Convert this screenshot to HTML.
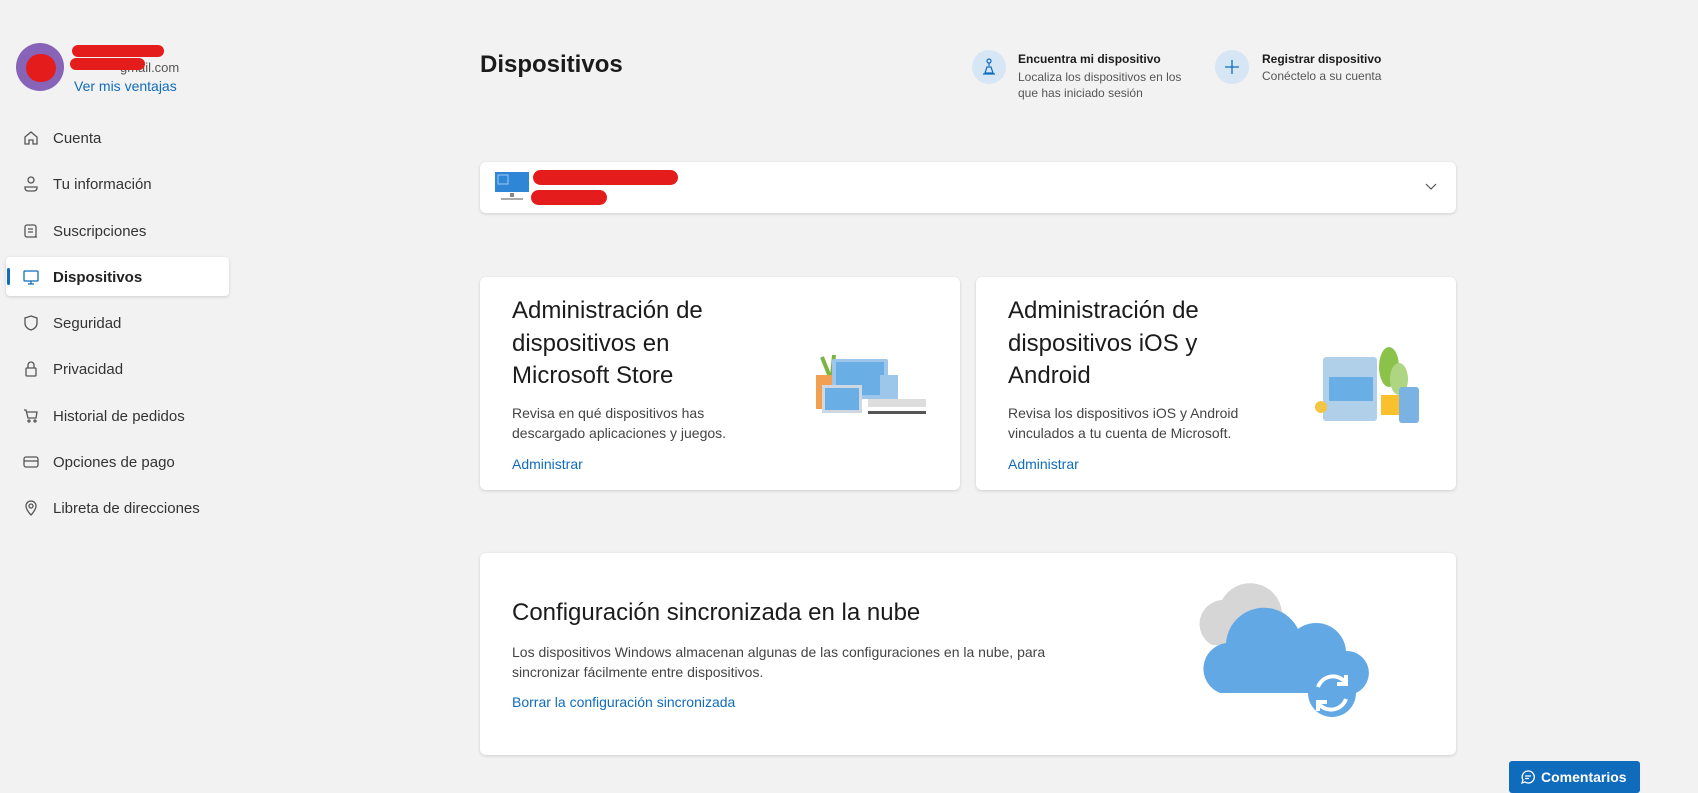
<!DOCTYPE html>
<html><head><meta charset="utf-8"><style>
*{box-sizing:border-box;margin:0;padding:0}
body{width:1698px;height:790px;background:#f2f2f2;font-family:"Segoe UI","Liberation Sans",sans-serif;color:#1b1b1b;position:relative;overflow:hidden}
.a{position:absolute}
.nav{position:absolute;left:22px;font-size:15px;color:#333;height:20px;display:flex;align-items:center}
.nav svg{width:18px;height:18px;margin-right:7px;fill:none;stroke:#555;stroke-width:1.3}
.card{position:absolute;background:#fff;border-radius:6px;box-shadow:0 1px 3px rgba(0,0,0,.15)}
.ct{position:absolute;left:32px;font-size:24px;line-height:32.5px;color:#1b1b1b}
.cd{position:absolute;left:32px;font-size:14px;line-height:20px;color:#444}
.lk{position:absolute;left:32px;font-size:14px;color:#0f6cbd}
.red{position:absolute;background:#e51c1c;border-radius:12px}
</style></head><body>
<div class="a" style="left:16px;top:43px;width:48px;height:48px;border-radius:50%;background:#8764b8"></div>
<div class="red" style="left:26px;top:54px;width:30px;height:28px;border-radius:14px"></div>
<div class="a" style="left:120px;top:60px;font-size:13px;color:#555">gmail.com</div>
<div class="red" style="left:72px;top:45px;width:92px;height:12px"></div>
<div class="red" style="left:70px;top:58px;width:75px;height:12px"></div>
<div class="a" style="left:74px;top:78px;font-size:14px;color:#0f6cbd">Ver mis ventajas</div>

<div class="a" style="left:6px;top:257px;width:223px;height:39px;background:#fff;border-radius:4px;box-shadow:0 1px 3px rgba(0,0,0,.15)"></div>
<div class="a" style="left:7px;top:268px;width:3px;height:17px;background:#0f6cbd;border-radius:2px"></div>

<div class="nav" style="top:128px"><svg viewBox="0 0 18 18"><path d="M3 8L9 3l6 5v7h-4v-4H7v4H3z"/></svg><span style="margin-left:6px">Cuenta</span></div>
<div class="nav" style="top:174px"><svg viewBox="0 0 18 18"><circle cx="9" cy="5" r="3"/><path d="M3 12h12v1a3 3 0 0 1-3 3H6a3 3 0 0 1-3-3z"/></svg><span style="margin-left:6px">Tu información</span></div>
<div class="nav" style="top:221px"><svg viewBox="0 0 18 18"><rect x="3" y="3" width="11" height="12" rx="2"/><path d="M6 7h5M6 10h5M13 15l2 0"/></svg><span style="margin-left:6px">Suscripciones</span></div>
<div class="nav" style="top:267px;font-weight:bold;color:#222"><svg viewBox="0 0 18 18" style="stroke:#0f6cbd"><rect x="2" y="3" width="14" height="10" rx="1"/><path d="M6 16h6M9 13v3"/></svg><span style="margin-left:6px">Dispositivos</span></div>
<div class="nav" style="top:313px"><svg viewBox="0 0 18 18"><path d="M9 2l6 2v5c0 4-3 6-6 7-3-1-6-3-6-7V4z"/></svg><span style="margin-left:6px">Seguridad</span></div>
<div class="nav" style="top:359px"><svg viewBox="0 0 18 18"><rect x="4" y="8" width="10" height="8" rx="1"/><path d="M6 8V5a3 3 0 0 1 6 0v3"/></svg><span style="margin-left:6px">Privacidad</span></div>
<div class="nav" style="top:406px"><svg viewBox="0 0 18 18"><path d="M2 3h2l2 8h8l1-6H5"/><circle cx="7" cy="14" r="1"/><circle cx="13" cy="14" r="1"/></svg><span style="margin-left:6px">Historial de pedidos</span></div>
<div class="nav" style="top:452px"><svg viewBox="0 0 18 18"><rect x="2" y="4" width="14" height="10" rx="2"/><path d="M2 8h14"/></svg><span style="margin-left:6px">Opciones de pago</span></div>
<div class="nav" style="top:498px"><svg viewBox="0 0 18 18"><path d="M9 16s-5-5-5-9a5 5 0 0 1 10 0c0 4-5 9-5 9z"/><circle cx="9" cy="7" r="2"/></svg><span style="margin-left:6px">Libreta de direcciones</span></div>

<div class="a" style="left:480px;top:51px;font-size:24px;font-weight:600">Dispositivos</div>

<div class="a" style="left:972px;top:50px;width:34px;height:34px;border-radius:50%;background:#d6e6f5"></div>
<svg class="a" style="left:981px;top:58px" width="16" height="18" viewBox="0 0 16 18" fill="none" stroke="#0f6cbd" stroke-width="1.2"><circle cx="8" cy="3" r="2"/><path d="M8 5v3M4 15l2-6h4l2 6zM2 16h12"/></svg>
<div class="a" style="left:1018px;top:52px;font-size:12px;font-weight:bold">Encuentra mi dispositivo</div>
<div class="a" style="left:1018px;top:69px;font-size:12px;color:#555;line-height:16px">Localiza los dispositivos en los<br>que has iniciado sesión</div>
<div class="a" style="left:1215px;top:50px;width:34px;height:34px;border-radius:50%;background:#d6e6f5"></div>
<svg class="a" style="left:1223px;top:58px" width="18" height="18" viewBox="0 0 18 18" stroke="#0f6cbd" stroke-width="1.3"><path d="M9 2v14M2 9h14"/></svg>
<div class="a" style="left:1262px;top:52px;font-size:12px;font-weight:bold">Registrar dispositivo</div>
<div class="a" style="left:1262px;top:69px;font-size:12px;color:#555">Conéctelo a su cuenta</div>

<div class="card" style="left:480px;top:162px;width:976px;height:51px"></div>
<svg class="a" style="left:495px;top:172px" width="34" height="30" viewBox="0 0 34 30"><rect x="0" y="0" width="34" height="20" fill="#2f86d6"/><rect x="3" y="3" width="10" height="9" fill="none" stroke="#9cc9f0"/><rect x="15" y="21" width="4" height="4" fill="#888"/><rect x="6" y="26" width="22" height="2" fill="#aaa"/></svg>
<div class="red" style="left:533px;top:170px;width:145px;height:15px"></div>
<div class="red" style="left:531px;top:190px;width:76px;height:15px"></div>
<svg class="a" style="left:1425px;top:183px" width="12" height="8" viewBox="0 0 12 8" fill="none" stroke="#555" stroke-width="1.2"><path d="M1 1l5 5 5-5"/></svg>

<div class="card" style="left:480px;top:277px;width:480px;height:213px">
<div class="ct" style="top:18px">Administración de<br>dispositivos en<br>Microsoft Store</div>
<div class="cd" style="top:126px">Revisa en qué dispositivos has<br>descargado aplicaciones y juegos.</div>
<div class="lk" style="top:179px">Administrar</div>
<svg class="a" style="left:330px;top:70px" width="130" height="70" viewBox="0 0 130 70"><path d="M20 30l-8-20M22 30l2-22M24 30l10-16" stroke="#7cb342" stroke-width="4"/><rect x="6" y="28" width="22" height="34" fill="#f0a050"/><rect x="22" y="12" width="56" height="40" rx="2" fill="#9ec6ea"/><rect x="26" y="15" width="48" height="33" fill="#6aaee6"/><rect x="70" y="28" width="18" height="30" fill="#9ec6ea"/><rect x="12" y="38" width="40" height="28" fill="#cfd8e0"/><rect x="15" y="41" width="34" height="22" fill="#6aaee6"/><rect x="58" y="52" width="58" height="8" fill="#ddd"/><rect x="58" y="64" width="58" height="3" fill="#555"/></svg>
</div>
<div class="card" style="left:976px;top:277px;width:480px;height:213px">
<div class="ct" style="top:18px">Administración de<br>dispositivos iOS y<br>Android</div>
<div class="cd" style="top:126px">Revisa los dispositivos iOS y Android<br>vinculados a tu cuenta de Microsoft.</div>
<div class="lk" style="top:179px">Administrar</div>
<svg class="a" style="left:335px;top:70px" width="110" height="80" viewBox="0 0 110 80"><rect x="12" y="10" width="54" height="64" rx="3" fill="#b0cfe8"/><rect x="18" y="30" width="44" height="24" fill="#6aaee6"/><ellipse cx="78" cy="20" rx="10" ry="20" fill="#8bc34a"/><ellipse cx="88" cy="32" rx="9" ry="16" fill="#aed581"/><rect x="70" y="48" width="20" height="20" fill="#fbc02d"/><rect x="88" y="40" width="20" height="36" rx="3" fill="#7ab3e3"/><circle cx="10" cy="60" r="6" fill="#f4c542"/></svg>
</div>

<div class="card" style="left:480px;top:553px;width:976px;height:202px">
<div class="ct" style="top:44px;font-size:24px">Configuración sincronizada en la nube</div>
<div class="cd" style="top:89px">Los dispositivos Windows almacenan algunas de las configuraciones en la nube, para<br>sincronizar fácilmente entre dispositivos.</div>
<div class="lk" style="top:141px">Borrar la configuración sincronizada</div>
<svg class="a" style="left:700px;top:30px" width="200" height="140" viewBox="0 0 200 140"><path d="M32 62a24 24 0 0 1 10-45 32 32 0 0 1 60 12 18 18 0 0 1-2 33z" fill="#d6d6d6"/><path d="M40 110a26 26 0 0 1 6-50 38 38 0 0 1 72-14 30 30 0 0 1 48 22 22 22 0 0 1 10 42z" fill="#62a8e5"/><circle cx="152" cy="110" r="24" fill="#62a8e5"/><path d="M138 104a16 16 0 0 1 28-4M166 116a16 16 0 0 1-28 4" fill="none" stroke="#fff" stroke-width="4"/><path d="M166 92v9h-9M138 128v-9h9" fill="none" stroke="#fff" stroke-width="4"/></svg>
</div>

<div class="a" style="left:1509px;top:761px;width:131px;height:32px;background:#0f6cbd;border-radius:3px;color:#fff;font-size:14px;font-weight:bold;display:flex;align-items:center;padding-left:11px">
<svg width="16" height="16" viewBox="0 0 16 16" fill="none" stroke="#fff" stroke-width="1.3" style="margin-right:5px"><path d="M8 2a6 6 0 1 1-3 11l-3 1 1-3A6 6 0 0 1 8 2zM5 7h6M5 9.5h4"/></svg>Comentarios</div>
</body></html>
